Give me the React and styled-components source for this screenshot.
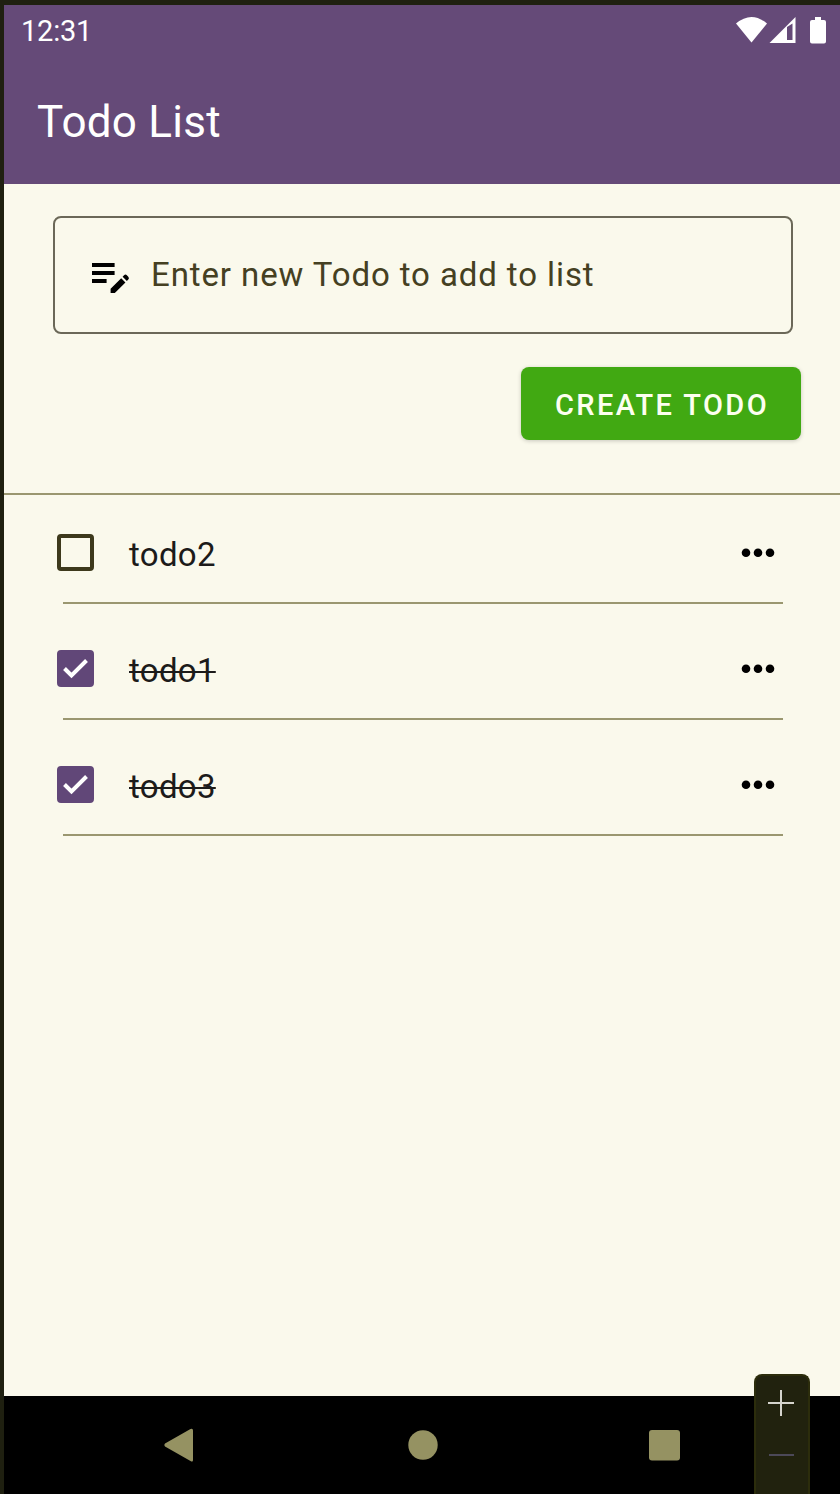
import React from "react";
import styled, { createGlobalStyle } from "styled-components";

const Global = createGlobalStyle`
  *{box-sizing:border-box}
  body{margin:0;background:#1f2010;font-family:Roboto,sans-serif}
`;
const Screen = styled.main`
  position:relative;width:840px;height:1494px;padding:5px 0 0 4px;overflow:hidden;
  display:flex;flex-direction:column;background:#1f2010;color:#1c1b1a;
`;
const Header = styled.header`height:179px;flex:none;background:#654a78;color:#fff;`;
const StatusBar = styled.div`
  height:50px;padding:1px 13px 0 17px;display:flex;align-items:center;justify-content:space-between;
  svg{margin-top:-1px}
`;
const Clock = styled.span`font-size:29px;line-height:34px;letter-spacing:-.2px;`;
const Title = styled.h1`margin:41px 0 0 33px;font-size:44px;line-height:52px;font-weight:400;letter-spacing:.25px;`;
const Body = styled.section`flex:1;background:#faf9ec;`;
const Form = styled.form`
  height:311px;padding:32px 39px 0 49px;border-bottom:2px solid #9a9770;
  display:flex;flex-direction:column;
`;
const Field = styled.label`
  width:740px;height:118px;flex:none;padding:0 0 1px 30.500px;border:2px solid #6b6858;border-radius:8px;
  display:flex;align-items:center;gap:17.500px;color:#454022;font-size:33px;letter-spacing:.9px;
`;
const Button = styled.button`
  align-self:flex-end;margin-top:33px;width:280px;height:73px;padding:3px 0 0 2px;border:0;border-radius:8px;
  background:#41a912;color:#fdfff0;font:500 29px Roboto,sans-serif;letter-spacing:2.4px;
  box-shadow:0 1px 4px #0003;
`;
const List = styled.ul`margin:0;padding:0 57px 0 59px;list-style:none;`;
const Item = styled.li`
  height:116px;padding:15px 8px 0 0;border-bottom:2px solid #9a9770;
  display:flex;align-items:center;
  &:first-child{height:109px;padding-top:8px}
`;
const Check = styled.span`
  width:37px;height:37px;margin-left:-6px;border-radius:4px;flex:none;
  border:4px solid ${(p) => (p.$on ? "#614778" : "#3d391c")};
  background:${(p) => (p.$on ? "#614778" : "transparent")};display:flex;
`;
const Name = styled.span`
  margin-left:35px;font-size:33px;line-height:40px;letter-spacing:.3px;padding-top:4px;
  text-decoration:${(p) => (p.$on ? "line-through" : "none")};text-decoration-thickness:2px;
`;
const More = styled.svg`margin-left:auto;`;
const Nav = styled.nav`height:98px;flex:none;background:#000;`;
const Zoom = styled.aside`
  position:absolute;left:754px;top:1374px;width:56px;height:120px;
  background:#21220e;border:2px solid #2c2d0c;border-bottom:0;border-radius:8px 8px 0 0;
`;

const todos = [
  { name: "todo2", done: false },
  { name: "todo1", done: true },
  { name: "todo3", done: true },
];

export default function App() {
  return (
    <Screen>
      <Global />
      <Header>
        <StatusBar>
          <Clock>12:31</Clock>
          <svg width="92" height="30" viewBox="735 14 92 30" fill="#fff">
            <path d="M736 22.500Q751.500 9.500 767 22.500L751.500 41.500Z" />
            <path fillRule="evenodd" d="M769.500 42L795.500 16V42ZM787 26V39H792.500V22.500Z" />
            <path d="M815 16h6v3h3q2 0 2 2v19.500q0 2-2 2h-12q-2 0-2-2V21q0-2 2-2h3z" />
          </svg>
        </StatusBar>
        <Title>Todo List</Title>
      </Header>
      <Body>
        <Form>
          <Field>
            <svg width="48" height="48" viewBox="0 0 24 24">
              <path d="M3 6h11.300v2H3zm0 4h11.300v2H3zm0 4h7.300v2H3zM18.310 12.870l.710-.710a1 1 0 0 1 1.410 0l.710.710a1 1 0 0 1 0 1.410l-.710.710zM17.600 13.580l-5.300 5.300V21h2.120l5.300-5.300z" />
            </svg>
            <span>Enter new Todo to add to list</span>
          </Field>
          <Button type="button">CREATE TODO</Button>
        </Form>
        <List>
          {todos.map(({ name, done }) => (
            <Item key={name}>
              <Check $on={done}>
                {done && (
                  <svg width="29" height="29" viewBox="0 0 29 29" fill="none" stroke="#fff" strokeWidth="4">
                    <path d="M3.500 14.500l7 7L25.500 6.500" />
                  </svg>
                )}
              </Check>
              <Name $on={done}>{name}</Name>
              <More width="34" height="10" viewBox="0 0 34 10">
                <circle cx="5" cy="4.700" r="4.300" />
                <circle cx="17" cy="4.700" r="4.300" />
                <circle cx="29" cy="4.700" r="4.300" />
              </More>
            </Item>
          ))}
        </List>
      </Body>
      <Nav>
        <svg width="836" height="98" viewBox="4 1396 836 98" fill="#959262">
          <path d="M165 1443.500L190.500 1429Q193 1428 193 1430.500V1460Q193 1462.500 190.500 1461L165 1446.500Q163.500 1445 165 1443.500Z" />
          <circle cx="423" cy="1445" r="14.700" />
          <rect x="649" y="1430" width="31" height="30.500" rx="3" />
        </svg>
      </Nav>
      <Zoom>
        <svg width="52" height="118" viewBox="756 1376 52 118" fill="none" strokeWidth="2">
          <path d="M768 1403h26M781 1390v26" stroke="#d5d4cd" />
          <path d="M769 1455h25" stroke="#4c4958" />
        </svg>
      </Zoom>
    </Screen>
  );
}
